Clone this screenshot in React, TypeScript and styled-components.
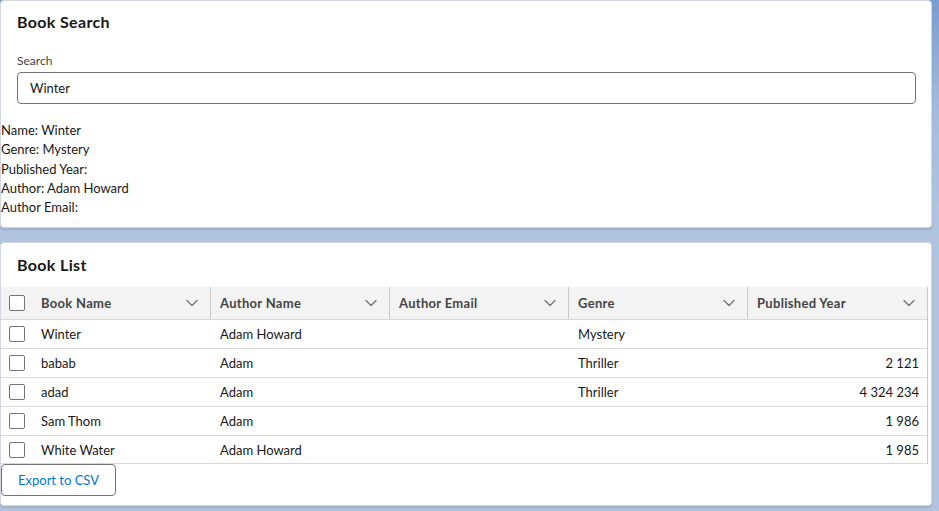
import React from "react";
import styled, { createGlobalStyle } from "styled-components";

const GlobalStyle = createGlobalStyle`
  html, body {
    margin: 0;
    padding: 0;
    min-height: 100%;
  }
  body {
    background: linear-gradient(180deg, #7a9dcf 0px, #a3bbdd 110px, #b0c4df 220px, #b0c4df 100%);
    font-family: Lato, "Noto Sans", "Liberation Sans", sans-serif;
    color: #181818;
    font-size: 13px;
    min-height: 511px;
  }
  * { box-sizing: border-box; }
`;

const Page = styled.div`
  display: flex;
  flex-direction: column;
  gap: 14px;
  width: 932px;
  padding-bottom: 3px;
`;

const Card = styled.section<{ $pb: number }>`
  background: #fff;
  border: 1px solid #d4d8de;
  border-radius: 4px;
  box-shadow: 0 2px 2px rgba(0, 0, 0, 0.1);
  padding-bottom: ${(p) => p.$pb}px;
`;

const CardTitle = styled.h2<{ $pt: number }>`
  margin: 0;
  padding: ${(p) => p.$pt}px 16px 0 16px;
  font-size: 16px;
  line-height: 20px;
  font-weight: 700;
  letter-spacing: 0.35px;
  color: #181818;
`;

const Field = styled.div`
  display: flex;
  flex-direction: column;
  gap: 2px;
  padding: 20px 15px 0 16px;
`;

const Label = styled.label`
  font-size: 12px;
  line-height: 18px;
  color: #444;
`;

const Input = styled.input`
  height: 32px;
  width: 100%;
  border: 1px solid #747474;
  border-radius: 4px;
  padding: 0 12px;
  font-family: inherit;
  font-size: 13px;
  color: #181818;
  background: #fff;
  outline: none;
`;

const Details = styled.div`
  display: flex;
  flex-direction: column;
  padding-top: 17px;
  line-height: 19.3px;
  font-size: 13px;
  color: #181818;
`;

const TableWrap = styled.div`
  margin-top: 12px;
  width: 927px;
  border-right: 1px solid #c9c9c9;
`;

const Row = styled.div<{ $head?: boolean }>`
  display: grid;
  grid-template-columns: 31px repeat(5, 179px);
  height: ${(p) => (p.$head ? "33px" : "28.8px")};
  align-items: center;
  background: ${(p) => (p.$head ? "#f3f3f3" : "#fff")};
  border-bottom: 1px solid #d8d8d8;
`;

const CheckCell = styled.div`
  display: flex;
  align-items: center;
  padding-left: 8px;
  height: 100%;
`;

const Box = styled.span`
  width: 16px;
  height: 16px;
  border: 1px solid #747474;
  border-radius: 2px;
  background: #fff;
  display: inline-block;
`;

const HeadCell = styled.div<{ $last?: boolean }>`
  display: flex;
  align-items: center;
  justify-content: space-between;
  height: 100%;
  padding: 0 12px 0 9px;
  font-weight: 700;
  letter-spacing: 0.3px;
  color: #444;
  border-right: ${(p) => (p.$last ? "none" : "1px solid #c9c9c9")};
`;

const Cell = styled.div<{ $num?: boolean }>`
  padding: 0 8px 0 9px;
  text-align: ${(p) => (p.$num ? "right" : "left")};
  white-space: nowrap;
  overflow: hidden;
  color: #181818;
`;

const Chevron = styled.svg`
  width: 12px;
  height: 12px;
  flex: none;
`;

const ButtonBar = styled.div`
  display: flex;
`;

const ExportButton = styled.button`
  height: 32px;
  padding: 0 16px;
  border: 1px solid #747474;
  border-radius: 4px;
  background: #fff;
  color: #0176d3;
  font-family: inherit;
  font-size: 13px;
  cursor: pointer;
`;

const columns = ["Book Name", "Author Name", "Author Email", "Genre", "Published Year"];

const books = [
  { name: "Winter", author: "Adam Howard", email: "", genre: "Mystery", year: "" },
  { name: "babab", author: "Adam", email: "", genre: "Thriller", year: "2 121" },
  { name: "adad", author: "Adam", email: "", genre: "Thriller", year: "4 324 234" },
  { name: "Sam Thom", author: "Adam", email: "", genre: "", year: "1 986" },
  { name: "White Water", author: "Adam Howard", email: "", genre: "", year: "1 985" },
];

const ChevronDown = () => (
  <Chevron viewBox="0 0 12 12" fill="none">
    <path d="M1 3.5 L6 8.5 L11 3.5" stroke="#747474" strokeWidth="1.3" strokeLinecap="round" strokeLinejoin="round" />
  </Chevron>
);

export default function App() {
  return (
    <>
      <GlobalStyle />
      <Page>
        <Card $pb={10}>
          <CardTitle $pt={11}>Book Search</CardTitle>
          <Field>
            <Label>Search</Label>
            <Input defaultValue="Winter" />
          </Field>
          <Details>
            <span>Name: Winter</span>
            <span>Genre: Mystery</span>
            <span>Published Year:</span>
            <span>Author: Adam Howard</span>
            <span>Author Email:</span>
          </Details>
        </Card>
        <Card $pb={9}>
          <CardTitle $pt={12}>Book List</CardTitle>
          <TableWrap>
            <Row $head>
              <CheckCell>
                <Box />
              </CheckCell>
              {columns.map((c, i) => (
                <HeadCell key={c} $last={i === columns.length - 1}>
                  <span>{c}</span>
                  <ChevronDown />
                </HeadCell>
              ))}
            </Row>
            {books.map((b) => (
              <Row key={b.name}>
                <CheckCell>
                  <Box />
                </CheckCell>
                <Cell>{b.name}</Cell>
                <Cell>{b.author}</Cell>
                <Cell>{b.email}</Cell>
                <Cell>{b.genre}</Cell>
                <Cell $num>{b.year}</Cell>
              </Row>
            ))}
          </TableWrap>
          <ButtonBar>
            <ExportButton>Export to CSV</ExportButton>
          </ButtonBar>
        </Card>
      </Page>
    </>
  );
}
